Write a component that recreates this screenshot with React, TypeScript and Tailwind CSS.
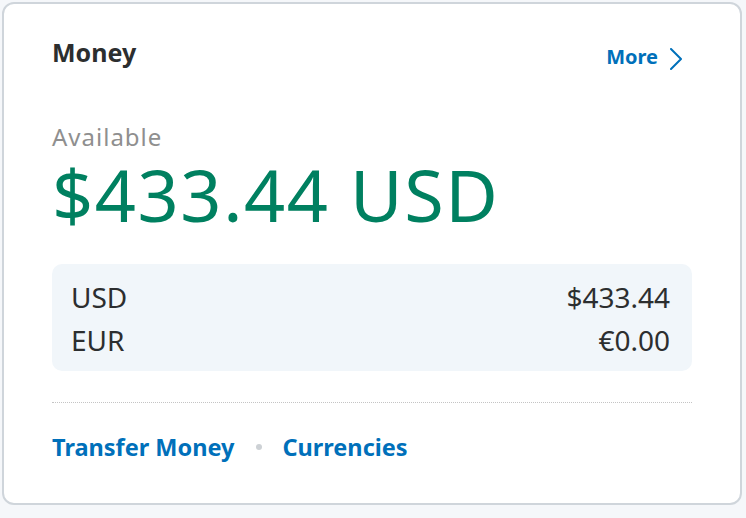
import React from "react";

export default function App() {
  const font = { fontFamily: '"Noto Sans", "Open Sans", sans-serif' };
  return (
    <div className="w-[746px] h-[518px] bg-[#f5f7fa] pt-[2px] pl-[2px]" style={font}>
      <div className="w-[740px] h-[503px] bg-white border-2 border-[#cfd5db] rounded-[12px] px-[48px]">
        <div className="flex justify-between items-start pt-[31px]">
          <h2 className="text-[25px] leading-[34px] font-bold text-[#2c2e2f]">Money</h2>
          <a className="flex items-center gap-[12px] mt-[7px] text-[20px] leading-[30px] font-bold text-[#0070ba] mr-[10px]">
            More
            <svg className="mt-[4px]" width="12" height="22" viewBox="0 0 12 22" fill="none">
              <path d="M1 1 L11 11 L1 21" stroke="#0070ba" strokeWidth="2" strokeLinecap="round" strokeLinejoin="round" />
            </svg>
          </a>
        </div>
        <div className="mt-[49px] text-[24px] leading-[32px] tracking-[1px] text-[#8f8f8f]">Available</div>
        <div className="text-[72px] leading-[72px] tracking-[1.6px] text-[#008060] mt-[5px]">$433.44 USD</div>
        <div className="mt-[34px] bg-[#f1f6fa] rounded-[10px] pl-[19px] pr-[22px] pt-[11px] pb-[9px] text-[28px] text-[#2c2e2f]">
          <div className="flex justify-between items-center h-[43.5px]">
            <span>USD</span>
            <span>$433.44</span>
          </div>
          <div className="flex justify-between items-center h-[43.5px]">
            <span>EUR</span>
            <span>€0.00</span>
          </div>
        </div>
        <div className="mt-[31px] border-t border-dotted border-[#c4c4c4]" />
        <div className="flex items-center mt-[29px] text-[23.5px] leading-[30px] font-bold text-[#0070ba]">
          <a>Transfer Money</a>
          <span className="ml-[22px] mr-[20px] w-[6px] h-[6px] rounded-full bg-[#cdd1d5]" />
          <a>Currencies</a>
        </div>
      </div>
    </div>
  );
}
